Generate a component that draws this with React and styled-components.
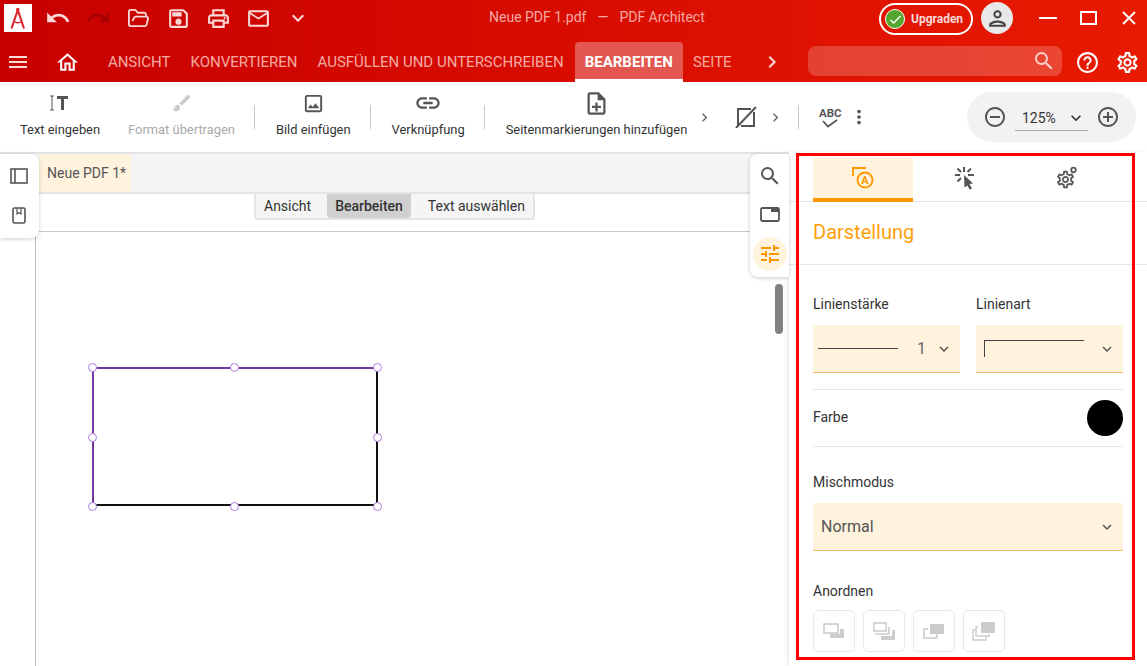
import React from 'react';
import styled, { createGlobalStyle } from 'styled-components';
import { FolderOpen } from 'lucide-react';
import {
  MdUndo, MdRedo, MdOutlineSave, MdOutlinePrint, MdOutlineMailOutline,
  MdExpandMore, MdMenu, MdOutlineHome, MdSearch, MdHelpOutline, MdOutlineSettings, MdOutlineImage,
  MdLink, MdOutlineNoteAdd, MdMoreVert, MdRemoveCircleOutline, MdAddCircleOutline, MdChevronRight,
  MdTune, MdBrush, MdOutlinePerson, MdCheck,
} from 'react-icons/md';

const tabs = ['Ansicht', 'Konvertieren', 'Ausfüllen und unterschreiben', 'Bearbeiten', 'Seite'];
const handles = [[0, 0], [50, 0], [100, 0], [0, 50], [100, 50], [0, 100], [50, 100], [100, 100]];

const App = () => (
  <Page>
    <GlobalStyle />
    <Header>
      <TitleBar>
        <Logo>
          <svg width="28" height="28" viewBox="0 0 28 28" fill="none" stroke="#e0242c">
            <path d="M13.8 6 L7.5 24.5 M13.8 6 L20 24.5" strokeWidth="2.1" />
            <path d="M9.5 17.5 Q13.8 20 18 17.5" strokeWidth="1.3" />
            <circle cx="13.8" cy="5.5" r="1.7" fill="#e0242c" stroke="none" />
          </svg>
        </Logo>
        <QuickIcons>
          <QuickIcon><MdUndo size={26} /></QuickIcon>
          <QuickIcon $off><MdRedo size={26} /></QuickIcon>
          <QuickIcon><FolderOpen size={23} strokeWidth={1.9} /></QuickIcon>
          <QuickIcon><MdOutlineSave size={25} /></QuickIcon>
          <QuickIcon><MdOutlinePrint size={25} /></QuickIcon>
          <QuickIcon><MdOutlineMailOutline size={25} /></QuickIcon>
          <QuickIcon><MdExpandMore size={24} /></QuickIcon>
        </QuickIcons>
        <DocTitle>Neue PDF 1.pdf<Dash>—</Dash>PDF Architect</DocTitle>
        <Upgrade>
          <UpgradeCheck><MdCheck size={15} /></UpgradeCheck>
          Upgraden
        </Upgrade>
        <Avatar><MdOutlinePerson size={25} /></Avatar>
        <WinButtons>
          <Minimize />
          <Maximize />
          <svg width="14" height="14" viewBox="0 0 14 14" stroke="#fff" strokeWidth="2"><path d="M1 1 L13 13 M13 1 L1 13" /></svg>
        </WinButtons>
      </TitleBar>
      <NavBar>
        <MenuIcon><MdMenu size={24} /></MenuIcon>
        <HomeIcon><MdOutlineHome size={25} /></HomeIcon>
        {tabs.map((t) => <NavTab key={t} $active={t === 'Bearbeiten'}>{t}</NavTab>)}
        <NavMore><MdChevronRight size={24} /></NavMore>
        <SearchBox><MdSearch size={24} /></SearchBox>
        <NavIcon $left={5}><MdHelpOutline size={25} /></NavIcon>
        <NavIcon><MdOutlineSettings size={25} /></NavIcon>
      </NavBar>
    </Header>

    <Toolbar>
      <Tool>
        <IconSlot>
          <svg width="20" height="20" viewBox="0 0 20 20" fill="none" stroke="#555">
            <path d="M0 3 H4 M0 17 H4 M2 3 V17" strokeWidth="1" />
            <path d="M7 4.5 H18 M12.5 4.5 V17" strokeWidth="3" />
          </svg>
        </IconSlot>
        <ToolLabel>Text eingeben</ToolLabel>
      </Tool>
      <Tool $left={28}>
        <IconSlot $off><MdBrush size={22} /></IconSlot>
        <ToolLabel $off>Format übertragen</ToolLabel>
      </Tool>
      <ToolSep />
      <Tool>
        <IconSlot><MdOutlineImage size={23} /></IconSlot>
        <ToolLabel>Bild einfügen</ToolLabel>
      </Tool>
      <ToolSep />
      <Tool>
        <IconSlot><MdLink size={28} /></IconSlot>
        <ToolLabel>Verknüpfung</ToolLabel>
      </Tool>
      <ToolSep />
      <Tool>
        <IconSlot><MdOutlineNoteAdd size={27} /></IconSlot>
        <ToolLabel>Seitenmarkierungen hinzufügen</ToolLabel>
      </Tool>
      <SmallChevron $left={9}><MdChevronRight size={17} /></SmallChevron>
      <ToolIcon $left={22}>
        <svg width="22" height="22" viewBox="0 0 22 22" fill="none" stroke="#555" strokeWidth="2">
          <path d="M3 20 V3 H16 M19 6 V20 H6" />
          <path d="M1 22 L21 1" />
        </svg>
      </ToolIcon>
      <SmallChevron $left={10}><MdChevronRight size={17} /></SmallChevron>
      <ToolSep $before={14} $after={21} />
      <SpellIcon>
        <AbcText>ABC</AbcText>
        <svg width="16" height="9" viewBox="0 0 16 9" fill="none" stroke="#555" strokeWidth="1.8"><path d="M1 2 L6 7.5 L15 1" /></svg>
      </SpellIcon>
      <ToolIcon $left={8}><MdMoreVert size={22} /></ToolIcon>
      <ZoomPill>
        <MdRemoveCircleOutline size={24} />
        <ZoomSelect>125%<MdExpandMore size={20} /></ZoomSelect>
        <MdAddCircleOutline size={24} />
      </ZoomPill>
    </Toolbar>

    <Main>
      <DocArea>
        <TabStrip><DocTab>Neue PDF 1*</DocTab></TabStrip>
        <ModeBar>
          <Segments>
            <Segment>Ansicht</Segment>
            <Segment $active>Bearbeiten</Segment>
            <Segment>Text auswählen</Segment>
          </Segments>
        </ModeBar>
        <Sheet>
          <Shape>
            {handles.map(([x, y]) => <Handle key={`${x}-${y}`} $x={x} $y={y} />)}
          </Shape>
        </Sheet>
        <LeftRail>
          <svg width="18" height="16" viewBox="0 0 18 16" fill="none" stroke="#555" strokeWidth="1.6">
            <rect x="1" y="1" width="16" height="14" /><path d="M5 1 V15" />
          </svg>
          <svg width="14" height="17" viewBox="0 0 14 17" fill="none" stroke="#555" strokeWidth="1.6">
            <rect x="1" y="1" width="12" height="15" rx="1.5" /><path d="M5 1 V7 L7 5.8 L9 7 V1" strokeWidth="1.2" />
          </svg>
        </LeftRail>
        <RightRail>
          <MdSearch size={24} />
          <svg width="20" height="15" viewBox="0 0 20 15" fill="none" stroke="#555" strokeWidth="1.8">
            <rect x="1" y="1" width="18" height="13" rx="1.5" />
            <rect x="11" y="1" width="8" height="4" fill="#555" stroke="none" />
          </svg>
          <ActiveRound><MdTune size={24} /></ActiveRound>
        </RightRail>
        <ScrollThumb />
      </DocArea>

      <Panel>
        <PanelTabs>
          <PanelTab $active>
            <svg width="24" height="24" viewBox="0 0 24 24" fill="none" stroke="#ff9800">
              <path d="M2 10 V2 H15" strokeWidth="1.8" />
              <circle cx="14" cy="14" r="7.5" strokeWidth="1.9" fill="#fff3de" />
              <text x="14" y="18" fontSize="11" fontWeight="700" fontFamily="Roboto" textAnchor="middle" fill="#ff9800" stroke="none">A</text>
            </svg>
          </PanelTab>
          <PanelTab>
            <svg width="22" height="24" viewBox="0 0 22 24" fill="none" stroke="#555" strokeWidth="2">
              <path d="M10 1 V6 M1 9 H6 M14 9 H20 M3.5 2.5 L7 6 M17 2.5 L13.5 6 M3.5 15.5 L7 12" />
              <path d="M10 9 L19 17.5 L15.5 18 L18 22.5 L15.5 23.5 L13.5 19.5 L10.5 21.5 Z" fill="#555" stroke="none" />
            </svg>
          </PanelTab>
          <PanelTab>
            <svg width="22" height="24" viewBox="0 0 22 24" fill="none">
              <MdOutlineSettings size={21} x={-1} y={3} color="#555" />
              <circle cx="17.5" cy="4" r="2.3" stroke="#555" strokeWidth="1.7" />
            </svg>
          </PanelTab>
        </PanelTabs>
        <PanelTitle>Darstellung</PanelTitle>
        <PanelBody>
          <FieldGrid>
            <div>
              <FieldLabel>Linienstärke</FieldLabel>
              <Select>
                <LinePreview />
                <WidthValue>1</WidthValue>
                <Chevron><MdExpandMore size={18} /></Chevron>
              </Select>
            </div>
            <div>
              <FieldLabel>Linienart</FieldLabel>
              <Select>
                <CornerPreview />
                <Chevron><MdExpandMore size={18} /></Chevron>
              </Select>
            </div>
          </FieldGrid>
          <ColorRow>
            <RowLabel>Farbe</RowLabel>
            <Swatch />
          </ColorRow>
          <FieldLabel $top={25}>Mischmodus</FieldLabel>
          <Select>
            <SelectText>Normal</SelectText>
            <Chevron><MdExpandMore size={18} /></Chevron>
          </Select>
          <FieldLabel $top={30} $bottom={9}>Anordnen</FieldLabel>
          <ArrangeRow>
            <ArrangeButton>
              <svg width="22" height="16" viewBox="0 0 22 16"><rect x="1" y="1" width="14" height="9" fill="#fff" stroke="#ccc" strokeWidth="1.6" /><path d="M17 6 H21 V15 H7 V11 H17 Z" fill="#ccc" /></svg>
            </ArrangeButton>
            <ArrangeButton>
              <svg width="22" height="19" viewBox="0 0 22 19" fill="none" stroke="#ccc" strokeWidth="1.6"><rect x="1" y="1" width="12" height="8" /><path d="M3 11 V12 H16 V5" /><path d="M19 8 H22 V18 H8 V14 H19 Z" fill="#ccc" stroke="none" /></svg>
            </ArrangeButton>
            <ArrangeButton>
              <svg width="22" height="16" viewBox="0 0 22 16"><path d="M5 6 H1 V15 H14 V11" fill="none" stroke="#ccc" strokeWidth="1.6" /><rect x="7" y="1" width="14" height="10" fill="#ccc" /></svg>
            </ArrangeButton>
            <ArrangeButton>
              <svg width="24" height="20" viewBox="0 0 24 20" fill="none" stroke="#ccc" strokeWidth="1.4"><path d="M3 9 H1 V19 H14 V16" /><path d="M6 6 H4 V15 H17 V13" /><rect x="9" y="1" width="14" height="11" fill="#ccc" stroke="none" /></svg>
            </ArrangeButton>
          </ArrangeRow>
        </PanelBody>
      </Panel>
      <RedFrame />
    </Main>
  </Page>
);

export default App;

const GlobalStyle = createGlobalStyle`
  html, body {
    margin: 0;
    padding: 0;
    background: #fff;
    overflow: hidden;
  }
  * {
    box-sizing: border-box;
  }
`;

const Page = styled.div`
  width: 1147px;
  height: 666px;
  overflow: hidden;
  display: flex;
  flex-direction: column;
  font-family: Roboto, "Liberation Sans", sans-serif;
  color: #333;
`;

const Header = styled.div`
  background: linear-gradient(90deg, #c70000 0%, #d80d00 50%, #e81a00 100%);
  height: 82px;
`;

const TitleBar = styled.div`
  display: flex;
  align-items: flex-start;
  height: 36px;
  padding-left: 4px;
`;

const Logo = styled.div`
  width: 28px;
  height: 28px;
  margin-top: 4px;
  background: #fff;
  display: flex;
`;

const QuickIcons = styled.div`
  display: flex;
  margin-left: 6px;
`;

const QuickIcon = styled.div`
  width: 40px;
  height: 36px;
  display: flex;
  align-items: center;
  justify-content: center;
  color: ${(p) => (p.$off ? '#a80000' : '#fbd9d9')};
`;

const DocTitle = styled.div`
  margin-left: 171px;
  height: 36px;
  line-height: 35px;
  font-size: 14px;
  color: #f5a9a5;
  white-space: nowrap;
`;

const Dash = styled.span`
  margin: 0 11px;
`;

const Upgrade = styled.div`
  margin-left: auto;
  margin-top: 3px;
  width: 94px;
  height: 32px;
  border: 2px solid #fff;
  border-radius: 16px;
  display: flex;
  align-items: center;
  gap: 6px;
  padding-left: 4px;
  color: #fbd9d9;
  font-size: 12px;
  font-weight: 700;
`;

const UpgradeCheck = styled.div`
  width: 20px;
  height: 20px;
  border-radius: 50%;
  background: #55a630;
  border: 1px solid #fff;
  display: flex;
  align-items: center;
  justify-content: center;
  color: #fff;
`;

const Avatar = styled.div`
  width: 32px;
  height: 32px;
  margin: 2px 0 0 8px;
  border-radius: 50%;
  background: #e8e8e8;
  color: #444;
  display: flex;
  align-items: center;
  justify-content: center;
`;

const WinButtons = styled.div`
  display: flex;
  align-items: center;
  height: 36px;
  margin-left: 26px;
  padding-right: 11px;
`;

const Minimize = styled.div`
  width: 18px;
  height: 2px;
  background: #fff;
  margin-right: 23px;
`;

const Maximize = styled.div`
  width: 17px;
  height: 14px;
  border: 2px solid #fff;
  margin-right: 25px;
`;

const NavBar = styled.div`
  display: flex;
  align-items: flex-end;
  height: 46px;
  color: #fff;
`;

const NavSlot = styled.div`
  height: 40px;
  display: flex;
  align-items: center;
  justify-content: center;
`;

const MenuIcon = styled(NavSlot)`
  width: 36px;
  color: #fbd9d9;
`;

const HomeIcon = styled(NavSlot)`
  width: 36px;
  margin: 0 12px 0 14px;
  color: #fff;
`;

const NavTab = styled.div`
  height: 40px;
  padding: 3px 10px 0;
  margin-left: ${(p) => (p.$active ? '1px' : '0')};
  display: flex;
  align-items: center;
  text-transform: uppercase;
  font-size: 15px;
  white-space: nowrap;
  color: ${(p) => (p.$active ? '#fff' : '#f7a9a3')};
  font-weight: ${(p) => (p.$active ? 700 : 400)};
  background: ${(p) => (p.$active ? '#e35750' : 'transparent')};
  border-radius: ${(p) => (p.$active ? '4px 4px 0 0' : '0')};
  border-bottom: 3px solid ${(p) => (p.$active ? '#fff' : 'transparent')};
`;

const NavMore = styled(NavSlot)`
  width: 24px;
  margin-left: 18px;
  color: #fbd9d9;
`;

const SearchBox = styled.div`
  width: 255px;
  height: 30px;
  margin: 0 0 6px 24px;
  border-radius: 8px;
  background: rgba(255, 255, 255, 0.2);
  display: flex;
  align-items: center;
  justify-content: flex-end;
  padding-right: 6px;
  color: #fbd0cb;
`;

const NavIcon = styled(NavSlot)`
  width: 40px;
  margin-left: ${(p) => p.$left || 0}px;
`;

const Toolbar = styled.div`
  height: 70px;
  display: flex;
  align-items: flex-start;
  padding-left: 20px;
  background: #fff;
`;

const Tool = styled.div`
  display: flex;
  flex-direction: column;
  align-items: center;
  height: 70px;
  margin-left: ${(p) => p.$left || 0}px;
`;

const IconSlot = styled.div`
  height: 38px;
  margin-top: 2px;
  display: flex;
  align-items: center;
  color: ${(p) => (p.$off ? '#ccc' : '#555')};
`;

const ToolLabel = styled.div`
  font-size: 12.9px;
  line-height: 16px;
  white-space: nowrap;
  color: ${(p) => (p.$off ? '#a8a8a8' : '#333')};
`;

const ToolSep = styled.div`
  width: 1px;
  height: 24px;
  margin: 23px ${(p) => p.$after || 21}px 0 ${(p) => p.$before || 19}px;
  background: #c8c8c8;
`;

const ToolIcon = styled.div`
  display: flex;
  align-items: center;
  height: 70px;
  margin-left: ${(p) => p.$left || 0}px;
  color: #555;
`;

const SmallChevron = styled(ToolIcon)`
  color: #666;
`;

const SpellIcon = styled.div`
  height: 70px;
  width: 20px;
  display: flex;
  flex-direction: column;
  align-items: center;
  justify-content: center;
  padding-top: 1px;
`;

const AbcText = styled.div`
  font-size: 11.5px;
  line-height: 10px;
  font-weight: 700;
  color: #555;
  margin-bottom: 1px;
`;

const ZoomPill = styled.div`
  width: 169px;
  height: 50px;
  margin: 10px 11px 0 auto;
  border-radius: 25px;
  background: #f2f2f2;
  display: flex;
  align-items: center;
  justify-content: space-between;
  padding: 0 16px;
  color: #555;
`;

const ZoomSelect = styled.div`
  width: 73px;
  height: 25px;
  margin-top: 2px;
  display: flex;
  align-items: center;
  justify-content: space-between;
  padding: 0 2px 0 7px;
  border-bottom: 1px solid #a9a9b4;
  font-size: 14px;
  color: #333;
`;

const Main = styled.div`
  position: relative;
  flex: 1;
  display: flex;
  min-height: 0;
`;

const DocArea = styled.div`
  position: relative;
  flex: 1;
  display: flex;
  flex-direction: column;
  min-width: 0;
`;

const TabStrip = styled.div`
  height: 42px;
  background: #f5f5f5;
  border-top: 2px solid #e4e4e4;
  border-bottom: 2px solid #e4e4e4;
  padding-left: 39px;
  display: flex;
`;

const DocTab = styled.div`
  width: 92px;
  background: #fff3de;
  padding-left: 8px;
  display: flex;
  align-items: center;
  font-size: 14px;
  color: #555;
`;

const ModeBar = styled.div`
  height: 38px;
  border-bottom: 1px solid #c8c8c8;
  padding-left: 254px;
`;

const Segments = styled.div`
  display: inline-flex;
  height: 26px;
  background: #f5f5f5;
  border: 2px solid #e4e4e4;
  border-top: none;
  border-radius: 0 0 4px 4px;
`;

const Segment = styled.div`
  display: flex;
  align-items: center;
  padding: 0 8px;
  font-size: 14px;
  color: #333;
  font-weight: ${(p) => (p.$active ? 500 : 400)};
  background: ${(p) => (p.$active ? '#d0d0d0' : 'transparent')};
  margin-right: ${(p) => (p.$active ? '9px' : '0')};
  border-radius: 0 0 4px 4px;
  &:first-child {
    margin-right: 8px;
  }
`;

const Sheet = styled.div`
  position: relative;
  flex: 1;
  margin-left: 35px;
  border-left: 1px solid #bbb;
`;

const Shape = styled.div`
  position: absolute;
  left: 56px;
  top: 135px;
  width: 286px;
  height: 139px;
  border: 2px solid;
  border-color: #7338a0 #111 #111 #7338a0;
`;

const Handle = styled.span`
  position: absolute;
  left: calc(${(p) => p.$x}% - 1.5px + ${(p) => p.$x * 0.025}px);
  top: calc(${(p) => p.$y}% - 1.5px + ${(p) => p.$y * 0.04}px);
  width: 9px;
  height: 9px;
  margin: -4.5px 0 0 -4.5px;
  border-radius: 50%;
  background: #fff;
  border: 1px solid #b07ae0;
`;

const LeftRail = styled.div`
  position: absolute;
  left: 0;
  top: 2px;
  width: 39px;
  height: 84px;
  background: #fff;
  border-radius: 0 8px 8px 0;
  box-shadow: 0 1px 4px rgba(0, 0, 0, 0.2);
  display: flex;
  flex-direction: column;
  align-items: center;
  justify-content: space-around;
  padding: 2px 2px 3px 0;
`;

const RightRail = styled.div`
  position: absolute;
  right: 0;
  top: 2px;
  width: 39px;
  height: 123px;
  background: #fff;
  border-radius: 8px 0 0 8px;
  box-shadow: 0 1px 4px rgba(0, 0, 0, 0.2);
  display: flex;
  flex-direction: column;
  align-items: center;
  padding-top: 10px;
  color: #555;
  gap: 19px;
`;

const ActiveRound = styled.div`
  width: 34px;
  height: 34px;
  margin-top: -4px;
  border-radius: 50%;
  background: #fff3de;
  color: #ff9800;
  display: flex;
  align-items: center;
  justify-content: center;
`;

const ScrollThumb = styled.div`
  position: absolute;
  left: 775px;
  top: 132px;
  width: 8px;
  height: 50px;
  border-radius: 4px;
  background: #808080;
`;

const Panel = styled.div`
  width: 358px;
  flex-shrink: 0;
  background: #fff;
  box-shadow: -2px 0 4px rgba(0, 0, 0, 0.08);
  display: flex;
  flex-direction: column;
`;

const PanelTabs = styled.div`
  height: 50px;
  padding: 5px 24px 0;
  display: flex;
  gap: 2px;
  border-bottom: 1px solid #e6e6e6;
`;

const PanelTab = styled.div`
  width: 100px;
  height: 45px;
  display: flex;
  align-items: center;
  justify-content: center;
  background: ${(p) => (p.$active ? '#fff3de' : 'transparent')};
  border-bottom: 4px solid ${(p) => (p.$active ? '#ff9800' : 'transparent')};
`;

const PanelTitle = styled.div`
  height: 63px;
  padding: 0 0 2px 24px;
  display: flex;
  align-items: center;
  font-size: 20px;
  color: #ff9f0a;
  border-bottom: 1px solid #e6e6e6;
`;

const PanelBody = styled.div`
  padding: 29px 24px 0;
`;

const FieldGrid = styled.div`
  display: grid;
  grid-template-columns: 147px 147px;
  column-gap: 16px;
`;

const FieldLabel = styled.div`
  margin-top: ${(p) => p.$top || 0}px;
  margin-bottom: ${(p) => p.$bottom ?? 11}px;
  height: 20px;
  line-height: 20px;
  font-size: 14px;
  color: #333;
`;

const Select = styled.div`
  height: 48px;
  display: flex;
  align-items: center;
  background: #fff3de;
  border-bottom: 1px solid #f4b860;
  padding-right: 7px;
`;

const LinePreview = styled.div`
  width: 80px;
  height: 1px;
  margin-left: 5px;
  background: #444;
`;

const WidthValue = styled.div`
  margin-left: 19px;
  font-size: 16px;
  color: #666;
`;

const Chevron = styled.div`
  margin-left: auto;
  display: flex;
  color: #555;
`;

const CornerPreview = styled.div`
  width: 100px;
  height: 17px;
  margin-left: 8px;
  border-top: 1px solid #444;
  border-left: 1px solid #444;
`;

const SelectText = styled.div`
  margin-left: 8px;
  font-size: 16px;
  color: #555;
`;

const ColorRow = styled.div`
  margin-top: 16px;
  height: 58px;
  display: flex;
  align-items: center;
  justify-content: space-between;
  border-top: 1px solid #e6e6e6;
  border-bottom: 1px solid #e6e6e6;
`;

const RowLabel = styled.div`
  margin-bottom: 3px;
  font-size: 14px;
  color: #333;
`;

const Swatch = styled.div`
  width: 36px;
  height: 36px;
  border-radius: 50%;
  background: #000;
`;

const ArrangeRow = styled.div`
  display: flex;
  gap: 8px;
`;

const ArrangeButton = styled.div`
  width: 42px;
  height: 42px;
  border: 1px solid #e8e8e8;
  border-radius: 5px;
  display: flex;
  align-items: center;
  justify-content: center;
`;

const RedFrame = styled.div`
  position: absolute;
  left: 796px;
  top: 1px;
  width: 339px;
  height: 507px;
  border: 3px solid #f00;
  pointer-events: none;
`;
